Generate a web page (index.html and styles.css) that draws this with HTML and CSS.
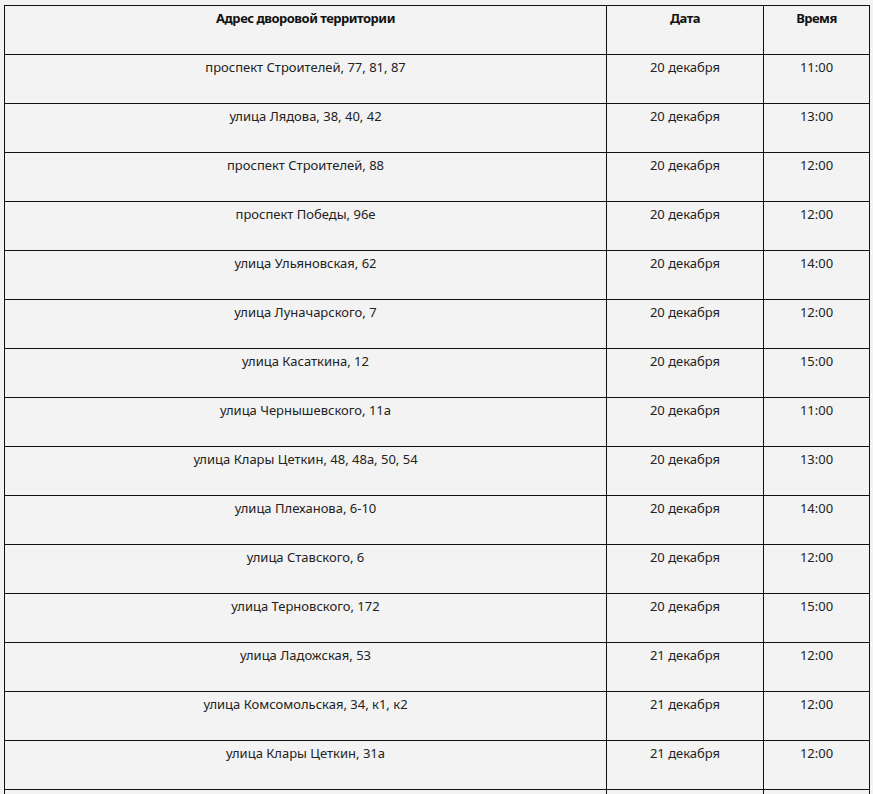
FILE: index.html
```html
<!DOCTYPE html>
<html lang="ru">
<head>
<meta charset="utf-8">
<title>График</title>
<link rel="stylesheet" href="styles.css">
</head>
<body>
<table class="schedule">
  <colgroup>
    <col class="c-addr">
    <col class="c-date">
    <col class="c-time">
  </colgroup>
  <thead>
    <tr><th>Адрес дворовой территории</th><th>Дата</th><th>Время</th></tr>
  </thead>
  <tbody>
    <tr><td>проспект Строителей, 77, 81, 87</td><td>20 декабря</td><td>11:00</td></tr>
    <tr><td>улица Лядова, 38, 40, 42</td><td>20 декабря</td><td>13:00</td></tr>
    <tr><td>проспект Строителей, 88</td><td>20 декабря</td><td>12:00</td></tr>
    <tr><td>проспект Победы, 96е</td><td>20 декабря</td><td>12:00</td></tr>
    <tr><td>улица Ульяновская, 62</td><td>20 декабря</td><td>14:00</td></tr>
    <tr><td>улица Луначарского, 7</td><td>20 декабря</td><td>12:00</td></tr>
    <tr><td>улица Касаткина, 12</td><td>20 декабря</td><td>15:00</td></tr>
    <tr><td>улица Чернышевского, 11а</td><td>20 декабря</td><td>11:00</td></tr>
    <tr><td>улица Клары Цеткин, 48, 48а, 50, 54</td><td>20 декабря</td><td>13:00</td></tr>
    <tr><td>улица Плеханова, 6-10</td><td>20 декабря</td><td>14:00</td></tr>
    <tr><td>улица Ставского, 6</td><td>20 декабря</td><td>12:00</td></tr>
    <tr><td>улица Терновского, 172</td><td>20 декабря</td><td>15:00</td></tr>
    <tr><td>улица Ладожская, 53</td><td>21 декабря</td><td>12:00</td></tr>
    <tr><td>улица Комсомольская, 34, к1, к2</td><td>21 декабря</td><td>12:00</td></tr>
    <tr><td>улица Клары Цеткин, 31а</td><td>21 декабря</td><td>12:00</td></tr>
    <tr><td></td><td></td><td></td></tr>
  </tbody>
</table>
</body>
</html>
```
FILE: styles.css
```css
html, body {
  background: #f3f3f3;
}
body {
  margin: 5px 0 0 4px;
  font-family: "Noto Sans", "Open Sans", sans-serif;
  font-size: 13px;
  color: #222;
}
.schedule {
  border-collapse: collapse;
  width: 865px;
  table-layout: fixed;
}
.c-addr { width: 602px; }
.c-date { width: 157px; }
.c-time { width: 106px; }
.schedule th,
.schedule td {
  border: 1px solid #111;
  height: 49px;
  padding: 2px 6px 0;
  box-sizing: border-box;
  vertical-align: top;
  text-align: center;
  line-height: 20px;
}
.schedule th {
  font-weight: bold;
  color: #111;
  letter-spacing: -0.5px;
}
```
